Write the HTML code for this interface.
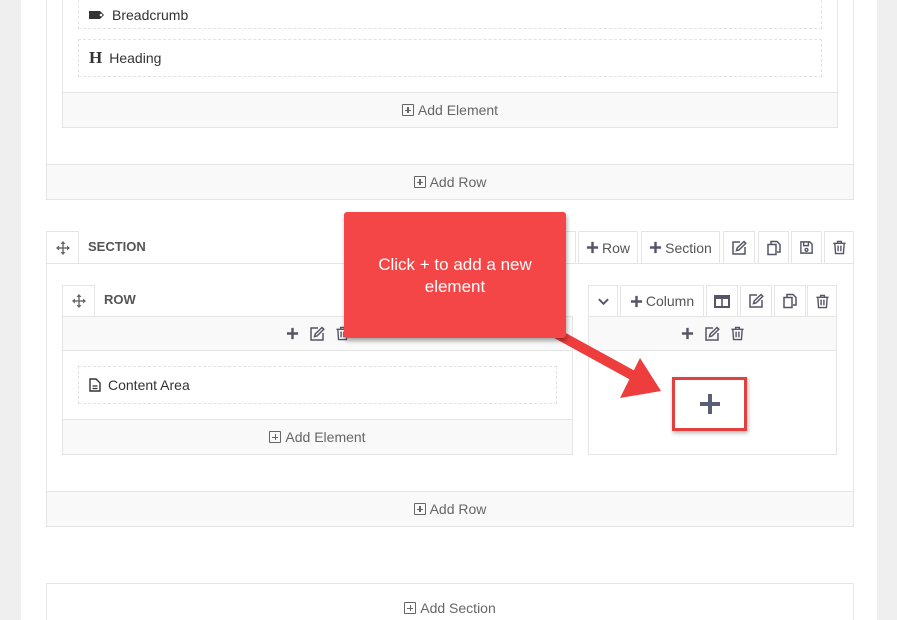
<!DOCTYPE html>
<html style="width:897px;height:620px;overflow:hidden"><head><meta charset="utf-8"><style>
*{box-sizing:border-box;margin:0;padding:0}
body{width:897px;height:620px;overflow:hidden;background:#efefef;font-family:"Liberation Sans",sans-serif;color:#444;position:relative}
.a{position:absolute}
.panel{left:21px;top:0;width:856px;height:620px;background:#fff}
.box{border:1px solid #e5e5e5;background:#fff}
.bar{background:#f9f9f9;border:1px solid #e5e5e5;font-size:14px;color:#666;display:flex;align-items:center;justify-content:center;gap:4px}
.dash{border:1px dashed #e2e2e2;font-size:14px;color:#333;display:flex;align-items:center;padding-left:10px;gap:7px}
.btn{border:1px solid #e5e5e5;background:#fff;display:flex;align-items:center;justify-content:center;font-size:14px;color:#555;gap:3px}
.pl{display:inline-block;width:12px;height:12px;border:1.3px solid #666;border-radius:1px;position:relative}
.pl:before{content:"";position:absolute;left:2px;top:4.5px;width:6px;height:1.5px;background:#666}
.pl:after{content:"";position:absolute;left:4.5px;top:2px;width:1.5px;height:6px;background:#666}
.hd{font-size:13px;font-weight:bold;color:#555}
svg{display:block}
.ic{fill:none;stroke:#556;stroke-width:1.5}
</style></head><body>
<svg width="0" height="0" style="position:absolute">
<defs>
<symbol id="ed" viewBox="0 0 16 16"><path class="ic" d="M9 2H2v12h12V7"/><path class="ic" d="M13 1.5l1.8 1.8L8 10l-2.5.6L6.2 8z"/></symbol>
<symbol id="cp" viewBox="0 0 16 16"><path class="ic" d="M5 4V1.5h6l3 3V12h-3"/><path class="ic" d="M2 4.5h8v10H2z"/></symbol>
<symbol id="tr" viewBox="0 0 16 16"><path class="ic" d="M1.5 3.5h13M6 3.5V1.5h4v2M3 3.5l.8 11h8.4l.8-11M6.5 6v6M9.5 6v6"/></symbol>
<symbol id="sv" viewBox="0 0 16 16"><path class="ic" d="M2 2h9.5L14 4.5V14H2z"/><path class="ic" d="M5 2v4h5V2"/><circle class="ic" cx="8" cy="10.5" r="1.5"/></symbol>
<symbol id="mv" viewBox="0 0 14 14"><g fill="#666"><path d="M7 0l2.5 3h-5zM7 14l2.5-3h-5zM0 7l3-2.5v5zM14 7l-3-2.5v5z"/><rect x="1" y="6.3" width="12" height="1.4"/><rect x="6.3" y="1" width="1.4" height="12"/></g></symbol>
<symbol id="pp" viewBox="0 0 14 14"><path d="M7 1v12M1 7h12" stroke="#556" stroke-width="2.6"/></symbol>
<symbol id="ch" viewBox="0 0 14 14"><path d="M2 4.5l5 5 5-5" fill="none" stroke="#556" stroke-width="2"/></symbol>
</defs></svg>
<div class="a panel"></div>
<div class="a box" style="left:46px;top:-5px;width:808px;height:205px"></div>
<div class="a box" style="left:62px;top:-5px;width:776px;height:133px"></div>
<div class="a dash" style="left:78px;top:-10px;width:744px;height:39px;padding-top:10px"><svg width="16" height="10" viewBox="0 0 16 10"><path d="M0 1h11l4 4-4 4H0z" fill="#333"/><circle cx="12" cy="5" r="1.3" fill="#fff"/></svg>Breadcrumb</div>
<div class="a dash" style="left:78px;top:39px;width:744px;height:38px"><span style="font-family:'Liberation Serif',serif;font-weight:bold;font-size:17px;color:#333">H</span>Heading</div>
<div class="a bar" style="left:62px;top:92px;width:776px;height:36px"><span class="pl"></span>Add Element</div>
<div class="a bar" style="left:46px;top:164px;width:808px;height:36px"><span class="pl"></span>Add Row</div>
<div class="a box" style="left:46px;top:263px;width:808px;height:264px"></div>
<div class="a box" style="left:46px;top:231px;width:33px;height:33px;display:flex;align-items:center;justify-content:center"><svg width="14" height="14"><use href="#mv"/></svg></div>
<div class="a hd" style="left:88px;top:239px">SECTION</div>
<div class="a btn" style="left:545px;top:231px;width:31px;height:33px"><svg width="13" height="13"><use href="#ch"/></svg></div>
<div class="a btn" style="left:578px;top:231px;width:60px;height:33px"><svg width="13" height="13"><use href="#pp"/></svg>Row</div>
<div class="a btn" style="left:641px;top:231px;width:79px;height:33px"><svg width="13" height="13"><use href="#pp"/></svg>Section</div>
<div class="a btn" style="left:723px;top:231px;width:32px;height:33px"><svg width="16" height="16"><use href="#ed"/></svg></div>
<div class="a btn" style="left:758px;top:231px;width:31px;height:33px"><svg width="16" height="16"><use href="#cp"/></svg></div>
<div class="a btn" style="left:791px;top:231px;width:31px;height:33px"><svg width="15" height="15"><use href="#sv"/></svg></div>
<div class="a btn" style="left:824px;top:231px;width:30px;height:33px"><svg width="15" height="15"><use href="#tr"/></svg></div>
<div class="a box" style="left:62px;top:316px;width:511px;height:139px"></div>
<div class="a box" style="left:62px;top:285px;width:33px;height:32px;display:flex;align-items:center;justify-content:center"><svg width="14" height="14"><use href="#mv"/></svg></div>
<div class="a hd" style="left:104px;top:292px">ROW</div>
<div class="a bar" style="left:62px;top:316px;width:511px;height:35px;gap:10px"><svg width="13" height="13"><use href="#pp"/></svg><svg width="16" height="16"><use href="#ed"/></svg><svg width="15" height="15"><use href="#tr"/></svg></div>
<div class="a dash" style="left:78px;top:366px;width:479px;height:38px"><svg width="12" height="14" viewBox="0 0 12 14"><path d="M1 1h6l4 4v8H1z" fill="none" stroke="#333" stroke-width="1.4"/><path d="M3.5 8h5M3.5 10.5h5" stroke="#333" stroke-width="1.2"/></svg>Content Area</div>
<div class="a bar" style="left:62px;top:419px;width:511px;height:36px"><span class="pl"></span>Add Element</div>
<div class="a box" style="left:588px;top:316px;width:249px;height:139px"></div>
<div class="a btn" style="left:588px;top:285px;width:30px;height:32px"><svg width="13" height="13"><use href="#ch"/></svg></div>
<div class="a btn" style="left:620px;top:285px;width:84px;height:32px"><svg width="13" height="13"><use href="#pp"/></svg>Column</div>
<div class="a btn" style="left:706px;top:285px;width:32px;height:32px"><svg width="16" height="13"><rect x="1" y="1" width="14" height="11" fill="none" stroke="#556" stroke-width="2"/><rect x="7.2" y="1" width="1.6" height="11" fill="#556"/><rect x="1" y="1" width="14" height="3" fill="#556"/></svg></div>
<div class="a btn" style="left:740px;top:285px;width:32px;height:32px"><svg width="16" height="16"><use href="#ed"/></svg></div>
<div class="a btn" style="left:774px;top:285px;width:32px;height:32px"><svg width="16" height="16"><use href="#cp"/></svg></div>
<div class="a btn" style="left:807px;top:285px;width:30px;height:32px"><svg width="15" height="15"><use href="#tr"/></svg></div>
<div class="a bar" style="left:588px;top:316px;width:249px;height:35px;gap:10px"><svg width="13" height="13"><use href="#pp"/></svg><svg width="16" height="16"><use href="#ed"/></svg><svg width="15" height="15"><use href="#tr"/></svg></div>
<div class="a" style="left:672px;top:377px;width:75px;height:54px;border:3px solid #e0403e;box-shadow:1px 2px 4px rgba(0,0,0,.3);display:flex;align-items:center;justify-content:center"><svg width="22" height="22" viewBox="0 0 22 22"><path d="M11 1v20M1 11h20" stroke="#5a5f73" stroke-width="4"/></svg></div>
<div class="a bar" style="left:46px;top:491px;width:808px;height:36px"><span class="pl"></span>Add Row</div>
<div class="a box" style="left:46px;top:583px;width:808px;height:37px;border-bottom:none"></div>
<div class="a" style="left:46px;top:600px;width:808px;display:flex;justify-content:center;gap:4px;font-size:14px;color:#666;align-items:center"><span class="pl"></span>Add Section</div>
<svg class="a" style="left:540px;top:320px" width="140" height="90" viewBox="0 0 140 90"><path d="M10 10 L92 55" stroke="#ee3d3d" stroke-width="10" fill="none"/><path d="M121 71 L80 78 L100 38z" fill="#ee3d3d"/></svg>
<div class="a" style="left:344px;top:212px;width:222px;height:126px;background:#f44646;border-radius:3px;box-shadow:1px 3px 4px rgba(0,0,0,.35);color:#fff;font-size:17px;text-align:center;padding-top:42px;line-height:22px">Click + to add a new<br>element</div>
</body></html>
